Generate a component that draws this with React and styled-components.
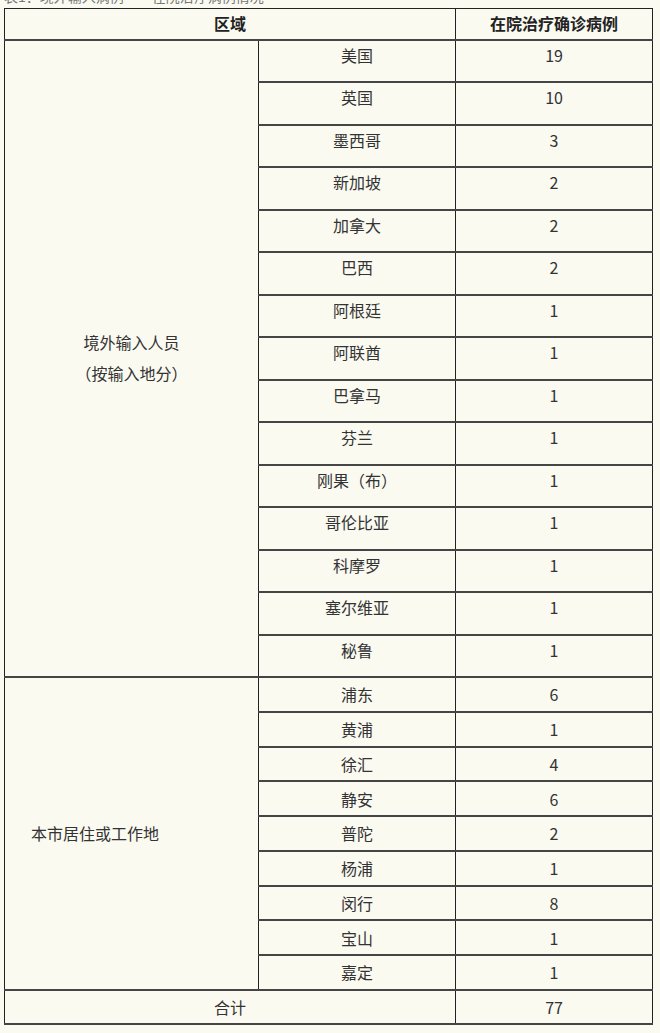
import styled, { createGlobalStyle } from "styled-components";

const GlobalStyle = createGlobalStyle`
  html, body {
    margin: 0;
    padding: 0;
    background: #fafaf1;
  }
  body {
    font-family: "Noto Sans CJK SC", "Noto Sans", sans-serif;
    color: #333;
  }
`;

const Page = styled.div`
  width: 660px;
  padding: 0 0 0 4px;
  box-sizing: border-box;
`;

const ClippedCaption = styled.div`
  height: 4px;
  overflow: hidden;
  font-size: 14px;
  line-height: 16px;
  color: #777;
  & > span {
    display: block;
    margin-top: -12px;
  }
`;

const Spacer = styled.div`
  height: 4px;
`;

const Table = styled.table`
  width: 648px;
  border-collapse: collapse;
  table-layout: fixed;
  font-size: 16px;
  border: 1px solid #222;
`;

const Cell = styled.td`
  border-left: 1px solid #222;
  border-right: 1px solid #222;
  border-top: 2px solid #454545;
  border-bottom: 2px solid #454545;
  padding: 0 ${(p) => p.$padLeft || 0}px ${(p) => p.$padBottom || 0}px;
  height: ${(p) => p.$h}px;
  text-align: ${(p) => (p.$left ? "left" : "center")};
  vertical-align: middle;
  line-height: 20px;
  box-sizing: border-box;
`;

const HeadCell = styled(Cell)`
  font-weight: bold;
  color: #222;
  border-top: 1px solid #222;
`;

const Line = styled.span`
  display: block;
  line-height: 31px;
`;

const abroad = [
  ["美国", 19],
  ["英国", 10],
  ["墨西哥", 3],
  ["新加坡", 2],
  ["加拿大", 2],
  ["巴西", 2],
  ["阿根廷", 1],
  ["阿联酋", 1],
  ["巴拿马", 1],
  ["芬兰", 1],
  ["刚果（布）", 1],
  ["哥伦比亚", 1],
  ["科摩罗", 1],
  ["塞尔维亚", 1],
  ["秘鲁", 1],
];

const local = [
  ["浦东", 6],
  ["黄浦", 1],
  ["徐汇", 4],
  ["静安", 6],
  ["普陀", 2],
  ["杨浦", 1],
  ["闵行", 8],
  ["宝山", 1],
  ["嘉定", 1],
];

export default function App() {
  return (
    <Page>
      <GlobalStyle />
      <ClippedCaption>
        <span>表1：境外输入病例　　在院治疗病例情况</span>
      </ClippedCaption>
      <Spacer />
      <Table>
        <colgroup>
          <col style={{ width: 254 }} />
          <col style={{ width: 197 }} />
          <col style={{ width: 197 }} />
        </colgroup>
        <tbody>
          <tr>
            <HeadCell colSpan={2} $h={31} $padBottom={2}>
              区域
            </HeadCell>
            <HeadCell $h={31} $padBottom={2}>
              在院治疗确诊病例
            </HeadCell>
          </tr>
          {abroad.map(([name, n], i) => (
            <tr key={name}>
              {i === 0 && (
                <Cell rowSpan={abroad.length}>
                  <Line>境外输入人员</Line>
                  <Line>（按输入地分）</Line>
                </Cell>
              )}
              <Cell $h={42.5} $padBottom={12}>
                {name}
              </Cell>
              <Cell $h={42.5} $padBottom={12}>
                {n}
              </Cell>
            </tr>
          ))}
          {local.map(([name, n], i) => (
            <tr key={name}>
              {i === 0 && (
                <Cell rowSpan={local.length} $left $padLeft={26}>
                  本市居住或工作地
                </Cell>
              )}
              <Cell $h={34.75}>{name}</Cell>
              <Cell $h={34.75}>{n}</Cell>
            </tr>
          ))}
          <tr>
            <Cell colSpan={2} $h={34}>
              合计
            </Cell>
            <Cell $h={34}>77</Cell>
          </tr>
        </tbody>
      </Table>
    </Page>
  );
}
